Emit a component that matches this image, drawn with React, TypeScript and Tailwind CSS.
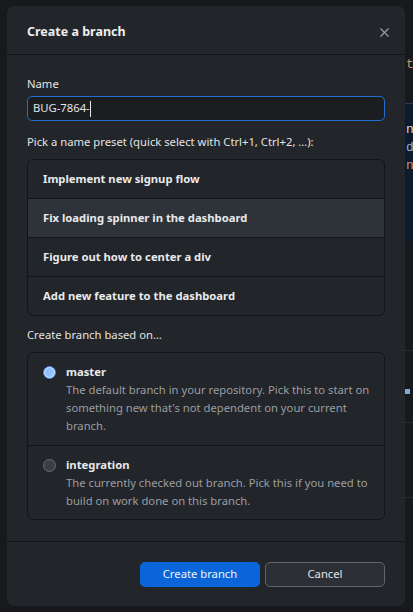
import { X } from 'lucide-react'

const presets = [
  'Implement new signup flow',
  'Fix loading spinner in the dashboard',
  'Figure out how to center a div',
  'Add new feature to the dashboard',
]

const bases = [
  {
    name: 'master',
    desc: "The default branch in your repository. Pick this to start on something new that's not dependent on your current branch.",
    checked: true,
  },
  {
    name: 'integration',
    desc: 'The currently checked out branch. Pick this if you need to build on work done on this branch.',
    checked: false,
  },
]

function Radio({ checked }: { checked: boolean }) {
  if (checked) {
    return (
      <span className="mt-[3px] flex h-[13px] w-[13px] shrink-0 items-center justify-center rounded-full border border-[#3d7fd6] bg-[#cfe3ff]">
        <span className="h-[9px] w-[9px] rounded-full bg-[#8fc2ff]" />
      </span>
    )
  }
  return <span className="mt-[3px] h-[13px] w-[13px] shrink-0 rounded-full border border-[#6a6d71] bg-[#3b3e42]" />
}

export default function App() {
  return (
    <div
      className="flex h-[612px] w-[413px] bg-[#17191c] pt-[6px] pl-[7px] text-[11.25px] text-[#e2e4e6]"
      style={{ fontFamily: '"Noto Sans", "Open Sans", sans-serif' }}
    >
      <div className="flex h-[600px] w-[398px] shrink-0 flex-col rounded-[7px] bg-[#222529]">
        <header className="flex h-[49px] items-center justify-between border-b border-[#131416] pt-[4px] pl-[20px] pr-[13px]">
          <h1 className="text-[12.5px] font-bold text-[#eceef0]">Create a branch</h1>
          <X className="h-[15px] w-[15px] text-[#9ea1a5]" strokeWidth={1.75} />
        </header>

        <div className="flex flex-1 flex-col px-[20px] pt-[20px]">
          <label className="leading-[18px]">Name</label>
          <div className="mt-[3px] flex h-[25px] items-center rounded-[5px] border-[1.5px] border-[#1f6fd1] bg-[#1b1d20] px-[5px]">
            <span>BUG-7864-</span>
            <span className="h-[16px] w-px bg-[#e6e6e6]" />
          </div>

          <p className="mt-[12px] leading-[18px]">Pick a name preset (quick select with Ctrl+1, Ctrl+2, …):</p>
          <ul className="mt-[8px] overflow-hidden rounded-[6px] border border-[#131517]">
            {presets.map((p, i) => (
              <li
                key={p}
                className={`flex items-center border-[#131517] px-[15px] font-bold text-[#e8eaec] ${i > 0 ? 'h-[39px] border-t' : 'h-[38px]'} ${i === 1 ? 'bg-[#2e333a]' : ''}`}
              >
                {p}
              </li>
            ))}
          </ul>

          <p className="mt-[10px] leading-[18px]">Create branch based on…</p>
          <ul className="mt-[8px] overflow-hidden rounded-[6px] border border-[#131517]">
            {bases.map((b, i) => (
              <li
                key={b.name}
                className={`flex gap-[10px] border-[#131517] pl-[15px] pr-[14px] pt-[10px] ${i > 0 ? 'border-t pb-[9px]' : 'pb-[10px]'}`}
              >
                <Radio checked={b.checked} />
                <div className="leading-[18px]">
                  <div className="font-bold text-[#e8eaec]">{b.name}</div>
                  <div className="text-[#9b9ea2]">{b.desc}</div>
                </div>
              </li>
            ))}
          </ul>
        </div>

        <footer className="flex h-[65px] items-center justify-end gap-[5px] border-t border-[#131416] px-[20px]">
          <button className="flex h-[25px] w-[120px] items-center justify-center rounded-[5px] bg-[#0a66d8] text-[#eef3fb]">
            Create branch
          </button>
          <button className="flex h-[25px] w-[120px] items-center justify-center rounded-[5px] border border-[#5e6470] bg-[#2c3036] text-[#e3e5e8]">
            Cancel
          </button>
        </footer>
      </div>

      <div className="flex flex-1 flex-col overflow-hidden pt-[50px] font-mono text-[13px] leading-[18px]">
        <span className="pl-[1px] text-[#c49a62]">te</span>
        <div className="mt-[29px] h-[138px] border-t border-[#2b3b55] bg-[#0e1a2e] pt-[17px] pl-[1px]">
          <div className="text-[#d5d8dc]">n</div>
          <div className="text-[#8fb3d9]">d</div>
          <div className="text-[#c49a62]">ne</div>
        </div>
        <div className="h-[110px] border-b border-[#2a2d31]" />
        <div className="mt-[38px] h-[5px] w-[5px] bg-[#7fa9d8]" />
        <div className="mt-[28px] h-[76px] border-t border-b border-[#2a2d31]" />
      </div>
    </div>
  )
}
